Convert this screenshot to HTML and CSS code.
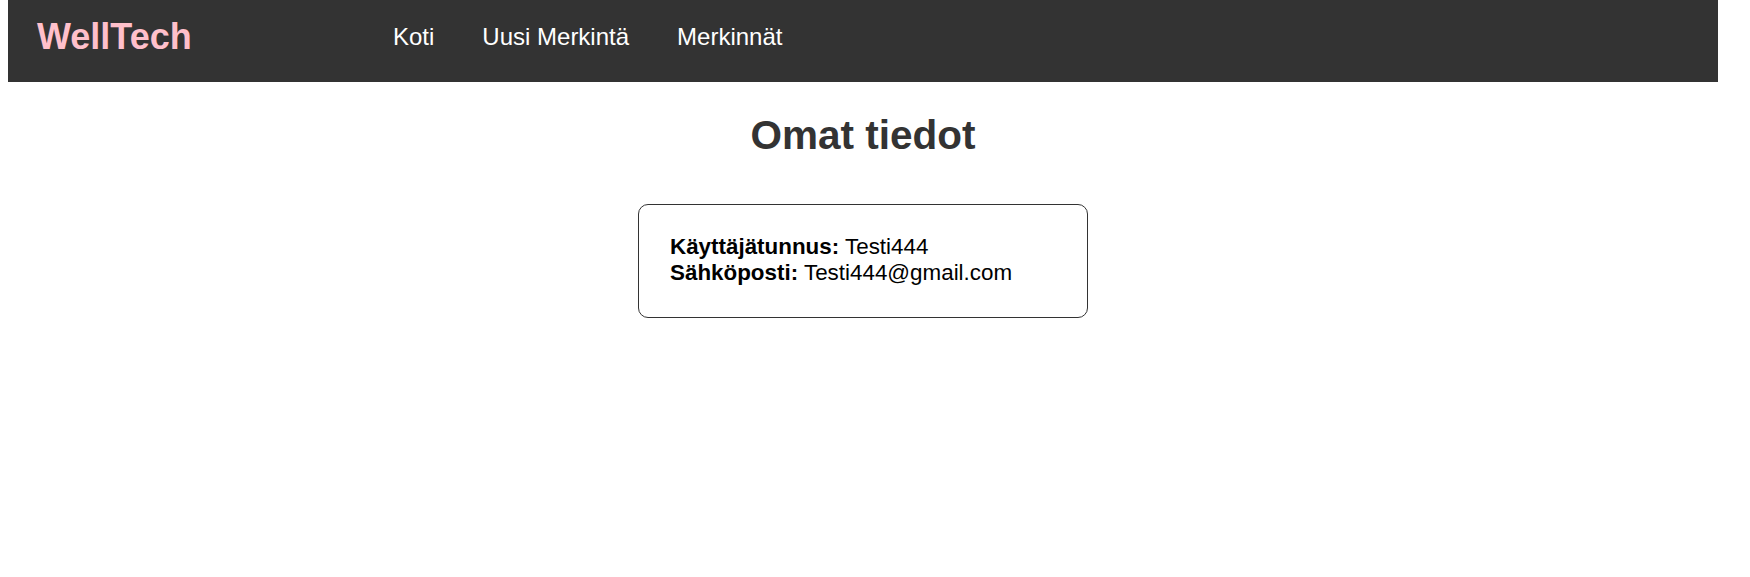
FILE: index.html
```html
<!DOCTYPE html>
<html lang="fi">
<head>
<meta charset="utf-8">
<title>Omat tiedot</title>
<link rel="stylesheet" href="styles.css">
</head>
<body>
<div class="page">
  <header class="topbar">
    <div class="logo">WellTech</div>
    <nav class="nav">
      <a href="#">Koti</a>
      <a href="#">Uusi Merkintä</a>
      <a href="#">Merkinnät</a>
    </nav>
  </header>
  <main class="content">
    <h1 class="title">Omat tiedot</h1>
    <div class="card">
      <div class="row"><strong>Käyttäjätunnus:</strong> Testi444</div>
      <div class="row"><strong>Sähköposti:</strong> Testi444@gmail.com</div>
    </div>
  </main>
</div>
</body>
</html>
```
FILE: styles.css
```css
html, body {
  margin: 0;
  padding: 0;
  background: #ffffff;
  font-family: "Liberation Sans", Arial, sans-serif;
}

.page {
  width: 1710px;
  margin-left: 8px;
}

.topbar {
  box-sizing: border-box;
  height: 82px;
  padding: 0 0 9px 29px;
  background: #333333;
  display: flex;
  align-items: center;
}

.logo {
  width: 356px;
  color: #ffc0cb;
  font-size: 36px;
  font-weight: bold;
}

.nav {
  display: flex;
  gap: 48px;
}

.nav a {
  color: #ffffff;
  text-decoration: none;
  font-size: 24px;
}

.content {
  display: flex;
  flex-direction: column;
  align-items: center;
}

.title {
  margin: 30px 0 45px;
  color: #333333;
  font-size: 40.5px;
  font-weight: bold;
}

.card {
  box-sizing: border-box;
  width: 450px;
  height: 114px;
  padding: 29px 31px 0;
  border: 1px solid #333333;
  border-radius: 10px;
  color: #000000;
  font-size: 22.4px;
}

.row {
  line-height: 25.7px;
}
```
